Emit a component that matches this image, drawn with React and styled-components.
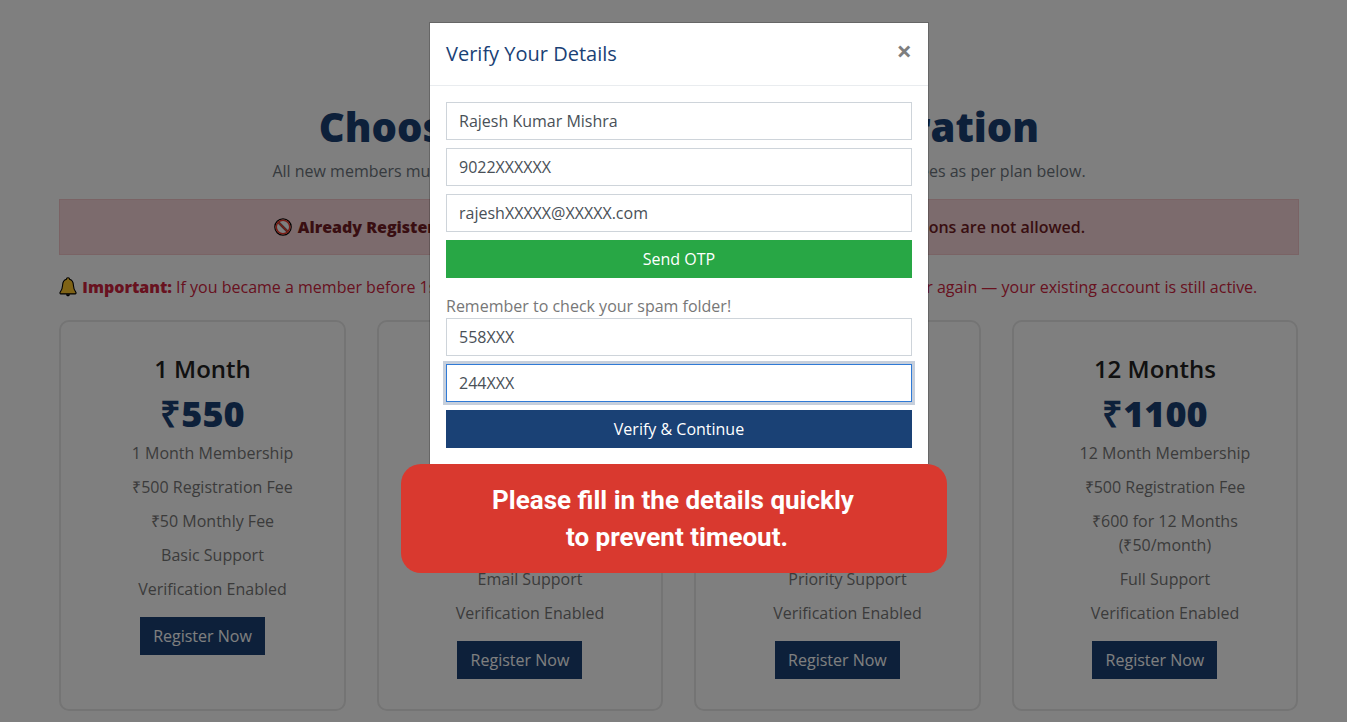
import React from "react";
import styled, { createGlobalStyle } from "styled-components";

const Global = createGlobalStyle`
  * { box-sizing: border-box; }
  html, body { margin: 0; padding: 0; height: 100%; overflow: hidden; background: #fff; }
  body { font-family: "Open Sans", "Liberation Sans", sans-serif; font-size: 16px; line-height: 24px; color: #555; }
`;

const Page = styled.main`
  padding: 100px 0 0 59.33px;
  width: 1347px;
`;
const Wrap = styled.div`
  width: 1239.33px;
`;
const Heading = styled.h1`
  margin: 0 0 5px;
  height: 54px;
  font-size: 40px;
  line-height: 54px;
  font-weight: 800;
  color: #1a4175;
  text-align: center;
`;
const Sub = styled.p`
  margin: 0 0 16px;
  text-align: center;
  color: #6c757d;
`;
const Alert = styled.div`
  height: 56px;
  display: flex;
  align-items: center;
  justify-content: center;
  gap: 5px;
  background: #f8d7da;
  border: 1px solid #f5c6cb;
  color: #721c24;
  font-weight: 800;
`;
const Semi = styled.span`
  font-weight: 600;
`;
const Notice = styled.p`
  margin: 20px 0 21px;
  display: flex;
  align-items: center;
  gap: 5px;
  color: #d0243f;
  white-space: nowrap;
  strong { font-weight: 800; }
`;
const Plans = styled.div`
  display: grid;
  grid-template-columns: repeat(4, 286.3px);
  gap: 31.2px;
`;
const Card = styled.article`
  height: 391px;
  padding: 30px 20px;
  border: 2px solid #e8e8e8;
  border-radius: 10px;
  display: flex;
  flex-direction: column;
  align-items: center;
  text-align: center;
`;
const Term = styled.h3`
  margin: 1px 0 7px;
  font-size: 24px;
  line-height: 32px;
  font-weight: 600;
  color: #222;
`;
const Price = styled.div`
  margin-bottom: 5px;
  font-size: 36px;
  line-height: 44px;
  font-weight: 800;
  color: #1a4175;
`;
const Features = styled.ul`
  list-style: none;
  margin: 0 0 6px;
  padding: 0 0 0 20px;
  width: 100%;
  color: #777;
  li { margin-bottom: 10px; }
`;
const RegisterBtn = styled.button`
  height: 38px;
  width: 125px;
  padding: 0;
  border: 0;
  background: #1a4175;
  color: #fff;
  font: inherit;
`;
const Overlay = styled.div`
  position: fixed;
  inset: 0;
  background: rgba(0, 0, 0, 0.5);
`;
const Modal = styled.section`
  width: 500px;
  margin: 22px 0 0 429px;
  background: #fff;
  border: 1px solid rgba(0, 0, 0, 0.2);
  border-bottom: 0;
  background-clip: padding-box;
`;
const ModalHead = styled.header`
  height: 63px;
  padding: 0 16px;
  display: flex;
  align-items: center;
  justify-content: space-between;
  border-bottom: 1px solid #e9ecef;
`;
const ModalTitle = styled.h5`
  margin: 0;
  font-size: 20px;
  line-height: 30px;
  font-weight: 400;
  color: #1a4175;
`;
const Close = styled.span`
  font-size: 27px;
  font-weight: 700;
  line-height: 1;
  color: #000;
  opacity: 0.5;
  margin: -7px 0 0;
`;
const ModalBody = styled.div`
  padding: 16px;
  display: flex;
  flex-direction: column;
  gap: 8px;
`;
const Input = styled.input`
  display: block;
  width: 100%;
  height: 38px;
  padding: 6px 12px;
  border: 1px solid ${(p) => (p.$focused ? "#2f7ad6" : "#ced4da")};
  box-shadow: ${(p) => (p.$focused ? "0 0 0 3px rgba(26, 65, 117, 0.25)" : "none")};
  outline: 0;
  border-radius: 0;
  background: #fff;
  color: #495057;
  font: inherit;
`;
const ActionBtn = styled.button`
  height: 38px;
  border: 0;
  border-radius: 0;
  background: ${(p) => p.$bg};
  color: #fff;
  font: inherit;
`;
const Hint = styled.div`
  margin-top: 8px;
  margin-bottom: -8px;
  color: #777;
`;
const Toast = styled.div`
  position: fixed;
  left: 401px;
  top: 464px;
  width: 546px;
  height: 109px;
  padding-right: 2px;
  display: flex;
  align-items: center;
  justify-content: center;
  background: #d9392f;
  border-radius: 20px;
  color: #fff;
  font-family: Roboto, "Liberation Sans", sans-serif;
  font-size: 26px;
  font-weight: 700;
  line-height: 37px;
  text-align: center;
`;
const ToastTail = styled.span`
  padding-left: 8px;
`;
const Glyph = styled.svg`
  flex: none;
  display: block;
`;

const NoEntry = () => (
  <Glyph width="20" height="20" viewBox="0 0 20 20" aria-hidden="true">
    <circle cx="10" cy="10" r="8.2" fill="#fff" stroke="#000" strokeWidth="1.2" />
    <circle cx="10" cy="10" r="6.8" fill="none" stroke="#f0392b" strokeWidth="1.6" />
    <path d="M5.2 5.2 L14.8 14.8" stroke="#f0392b" strokeWidth="1.7" />
    <path d="M4.800 6.200 L13.800 15.200 M6.200 4.800 L15.200 13.800" stroke="#000" strokeWidth="0.5" />
  </Glyph>
);
const Bell = () => (
  <Glyph width="18" height="20" viewBox="0 0 18 20" aria-hidden="true">
    <path d="M7 17.200h4c0 1.200-.9 2.100-2 2.100s-2-.9-2-2.100z" fill="#000" />
    <path d="M9 .8c.9 0 1.600.7 1.600 1.500 2.700.8 3.700 3.200 3.800 6 .1 3.100.9 5.100 2.500 7 .4.600.1 1.600-.7 1.600H1.800c-.8 0-1.100-1-.7-1.600 1.600-1.900 2.400-3.900 2.500-7 .1-2.800 1.100-5.200 3.800-6C7.400 1.500 8.100.8 9 .8z" fill="#ffc62c" stroke="#000" strokeWidth="1.100" />
  </Glyph>
);

const plans = [
  { term: "1 Month", price: "₹550", items: ["1 Month Membership", "₹500 Registration Fee", "₹50 Monthly Fee", "Basic Support", "Verification Enabled"] },
  { term: "3 Months", price: "₹650", items: ["3 Month Membership", "₹500 Registration Fee", "₹150 for 3 Months (₹50/month)", "Email Support", "Verification Enabled"] },
  { term: "6 Months", price: "₹800", items: ["6 Month Membership", "₹500 Registration Fee", "₹300 for 6 Months (₹50/month)", "Priority Support", "Verification Enabled"] },
  { term: "12 Months", price: "₹1100", items: ["12 Month Membership", "₹500 Registration Fee", "₹600 for 12 Months (₹50/month)", "Full Support", "Verification Enabled"] },
];

export default function App() {
  return (
    <>
      <Global />
      <Page>
        <Wrap>
          <Heading>Choose Your Plans For Registration</Heading>
          <Sub>All new members must pay one-time registration fee of ₹500/- along with the monthly fees as per plan below.</Sub>
          <Alert>
            <NoEntry />
            <span>Already Registered Customers Should Not Register Again:&nbsp; <Semi>Duplicate registrations are not allowed.</Semi></span>
          </Alert>
          <Notice>
            <Bell />
            <span><strong>Important:</strong> If you became a member before 1st of August 2024, you do not need to pay any joining fee or register again — your existing account is still active.</span>
          </Notice>
          <Plans>
            {plans.map((p) => (
              <Card key={p.term}>
                <Term>{p.term}</Term>
                <Price>{p.price}</Price>
                <Features>
                  {p.items.map((i) => <li key={i}>{i}</li>)}
                </Features>
                <RegisterBtn>Register Now</RegisterBtn>
              </Card>
            ))}
          </Plans>
        </Wrap>
      </Page>
      <Overlay>
        <Modal>
          <ModalHead>
            <ModalTitle>Verify Your Details</ModalTitle>
            <Close>×</Close>
          </ModalHead>
          <ModalBody>
            <Input readOnly value="Rajesh Kumar Mishra" />
            <Input readOnly value="9022XXXXXX" />
            <Input readOnly value="rajeshXXXXX@XXXXX.com" />
            <ActionBtn $bg="#28a745">Send OTP</ActionBtn>
            <Hint>Remember to check your spam folder!</Hint>
            <Input readOnly value="558XXX" />
            <Input readOnly $focused value="244XXX" />
            <ActionBtn $bg="#1a4175">Verify &amp; Continue</ActionBtn>
          </ModalBody>
        </Modal>
        <Toast>
          <div>Please fill in the details quickly<br /><ToastTail>to prevent timeout.</ToastTail></div>
        </Toast>
      </Overlay>
    </>
  );
}
